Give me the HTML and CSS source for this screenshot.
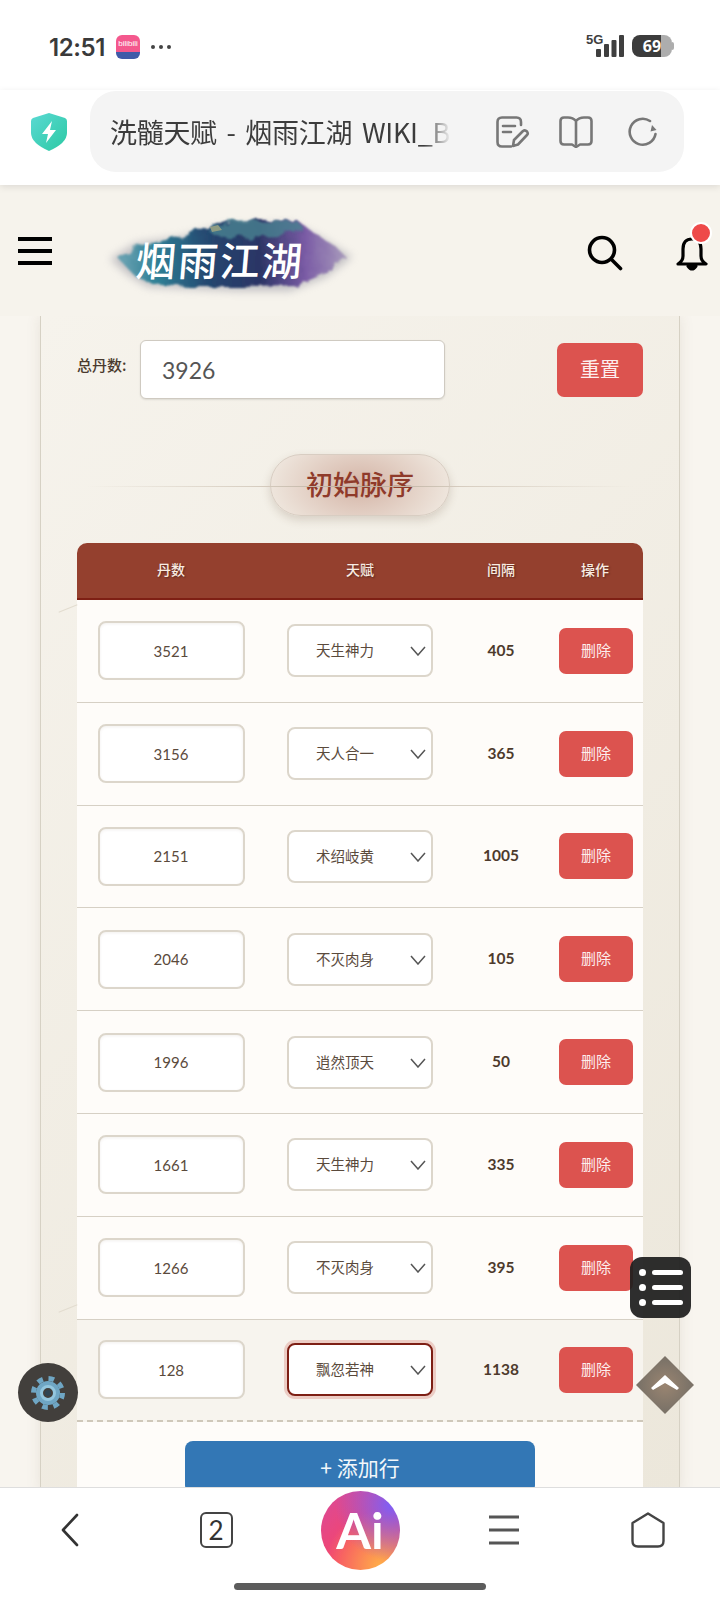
FILE: index.html
```html
<!DOCTYPE html>
<html lang="zh-CN">

<head>
    <meta charset="UTF-8">
    <meta name="viewport" content="width=device-width, initial-scale=1.0">
    <title>洗髓天赋 - 烟雨江湖 WIKI</title>
    <link rel="stylesheet" href="styles.css">
</head>

<body>
    <div class="phone">
        <div class="status-bar">
            <span class="clock">12:51</span>
            <span class="app-badge"><span class="app-badge-name">bilibili</span></span>
            <span class="status-dots"><i></i><i></i><i></i></span>
            <span class="signal">
                <span class="signal-label">5G</span>
                <svg width="28" height="22" viewBox="0 0 28 22" fill="#3f3f3f">
                    <rect x="0" y="14" width="5" height="8" rx="1" />
                    <rect x="8" y="9" width="5" height="13" rx="1" />
                    <rect x="15.500" y="5" width="5" height="17" rx="1" />
                    <rect x="23" y="0" width="5" height="22" rx="1" />
                </svg>
            </span>
            <span class="battery"><span class="battery-level">69</span></span>
        </div>

        <div class="address-bar">
            <svg class="shield" width="36" height="38" viewBox="0 0 36 38">
                <defs>
                    <linearGradient id="shieldFill" x1="0" y1="0" x2="1" y2="1">
                        <stop offset="0" stop-color="#5ad9d3" />
                        <stop offset="1" stop-color="#2cc9a3" />
                    </linearGradient>
                </defs>
                <path d="M18 0 L34 5 Q36 6 36 8 V20 Q36 30 18 38 Q0 30 0 20 V8 Q0 6 2 5 Z" fill="url(#shieldFill)" />
                <path d="M21 8 L11 21 H17 L15 30 L25 17 H19 Z" fill="#fff" />
            </svg>
            <div class="url-pill">
                <span class="url-text">洗髓天赋 - 烟雨江湖 WIKI_B</span>
                <svg class="url-icon note" width="34" height="32" viewBox="0 0 34 32" fill="none" stroke="#777" stroke-width="2.600" stroke-linecap="round" stroke-linejoin="round">
                    <path d="M25 9 V6 Q25 1.500 20.500 1.500 H6 Q1.500 1.500 1.500 6 V26 Q1.500 30.500 6 30.500 H15" />
                    <path d="M7 10 H19 M7 16 H15" />
                    <path d="M17 30 L18 24 L27 15 Q29 13.500 31 15.500 Q32.500 17.500 31 19 L22 28.500 Z" />
                </svg>
                <svg class="url-icon book" width="34" height="32" viewBox="0 0 34 32" fill="none" stroke="#777" stroke-width="2.600" stroke-linejoin="round" stroke-linecap="round">
                    <path d="M17 5 Q14 1.500 9 1.500 H5 Q1.500 1.500 1.500 5 V25 Q1.500 28.500 5 28.500 H13 L17 31 L21 28.500 H29 Q32.500 28.500 32.500 25 V5 Q32.500 1.500 29 1.500 H25 Q20 1.500 17 5 V28" />
                </svg>
                <svg class="url-icon refresh" width="30" height="30" viewBox="0 0 30 30" fill="none" stroke="#777" stroke-width="2.600" stroke-linecap="round">
                    <path d="M27.500 17 A13 13 0 1 1 22 4" />
                    <path d="M24 8 L28.500 13 L22.500 14.500 Z" fill="#777" stroke="none" />
                </svg>
            </div>
        </div>

        <header class="site-header">
            <div class="hamburger"><i></i><i></i><i></i></div>
            <svg class="logo" width="280" height="100" viewBox="0 0 280 100">
                <defs>
                    <linearGradient id="inkFill" x1="0" y1="0" x2="1" y2="0">
                        <stop offset="0" stop-color="#6fa5b4" />
                        <stop offset="0.170" stop-color="#2f7f95" />
                        <stop offset="0.400" stop-color="#24466f" />
                        <stop offset="0.620" stop-color="#2b3565" />
                        <stop offset="0.820" stop-color="#7a5ba5" />
                        <stop offset="1" stop-color="#a99cbc" />
                    </linearGradient>
                    <filter id="inkEdge" x="-10%" y="-30%" width="120%" height="160%">
                        <feTurbulence type="fractalNoise" baseFrequency="0.09" numOctaves="3" seed="4" result="noise" />
                        <feDisplacementMap in="SourceGraphic" in2="noise" scale="9" />
                        <feGaussianBlur stdDeviation="1.200" />
                    </filter>
                    <filter id="inkHaze" x="-10%" y="-30%" width="120%" height="160%">
                        <feGaussianBlur stdDeviation="4" />
                    </filter>
                </defs>
                <path d="M20 54 L46 38 L90 32 L130 22 L200 18 L230 32 L262 52 L236 72 L200 86 L150 86 L100 84 L58 82 L38 70 Z" fill="#8f8f9c" opacity="0.500" filter="url(#inkHaze)" />
                <path d="M28 53 L48 41 L85 33 L112 24 L140 16 L205 14 L224 28 L246 42 L256 52 L236 68 L205 81 L150 82 L100 82 L60 79 L42 68 Z" fill="url(#inkFill)" filter="url(#inkEdge)" />
                <path d="M118 25 L124 20 L132 22 L140 15 L160 14 L172 18 L182 14 L206 15 L214 23 L190 31 L150 33 L125 31 Z" fill="#4a8291" filter="url(#inkEdge)" opacity="0.800" />
                <path d="M120 22 L128 20 L132 25 L122 27 Z" fill="#b0ae80" opacity="0.700" />
                <text class="logo-text" x="45" y="71" transform="skewX(-5) translate(6 0)">烟雨江湖</text>
            </svg>
            <div class="header-tools">
                <svg width="36" height="36" viewBox="0 0 36 36" fill="none" stroke="#000" stroke-width="3.600" stroke-linecap="round">
                    <circle cx="15" cy="15" r="12.500" />
                    <path d="M24.500 24.500 L33.500 33.500" />
                </svg>
                <span class="bell">
                    <svg width="32" height="36" viewBox="0 0 32 36" fill="none" stroke="#000" stroke-width="3.200" stroke-linejoin="round">
                        <path d="M16 4 Q25 4 25 14 V21 Q25 26 30 29 H2 Q7 26 7 21 V14 Q7 4 16 4 Z" />
                        <path d="M12 31 Q16 37 20 31 Z" fill="#000" />
                    </svg>
                    <span class="bell-dot"></span>
                </span>
            </div>
        </header>

        <main class="page">
            <section class="panel">
                <div class="total-row">
                    <label class="total-label" for="totalPills">总丹数:</label>
                    <input class="total-input" id="totalPills" type="text" value="3926">
                    <button class="danger-btn reset-btn">重置</button>
                </div>

                <div class="section-title"><h2>初始脉序</h2></div>

                <div class="pulse-table">
                    <div class="pulse-head">
                        <span>丹数</span><span>天赋</span><span>间隔</span><span>操作</span>
                    </div>

                    <div class="pulse-row">
                        <div class="cell"><input class="pill-input" type="text" value="3521"></div>
                        <div class="cell"><span class="talent-select"><select><option>天生神力</option></select><svg width="16" height="10" viewBox="0 0 16 10" fill="none" stroke="#555" stroke-width="1.500"><path d="M1 1 L8 9 L15 1" /></svg></span></div>
                        <div class="cell gap-value">405</div>
                        <div class="cell"><button class="danger-btn delete-btn">删除</button></div>
                    </div>
                    <div class="pulse-row">
                        <div class="cell"><input class="pill-input" type="text" value="3156"></div>
                        <div class="cell"><span class="talent-select"><select><option>天人合一</option></select><svg width="16" height="10" viewBox="0 0 16 10" fill="none" stroke="#555" stroke-width="1.500"><path d="M1 1 L8 9 L15 1" /></svg></span></div>
                        <div class="cell gap-value">365</div>
                        <div class="cell"><button class="danger-btn delete-btn">删除</button></div>
                    </div>
                    <div class="pulse-row">
                        <div class="cell"><input class="pill-input" type="text" value="2151"></div>
                        <div class="cell"><span class="talent-select"><select><option>术绍岐黄</option></select><svg width="16" height="10" viewBox="0 0 16 10" fill="none" stroke="#555" stroke-width="1.500"><path d="M1 1 L8 9 L15 1" /></svg></span></div>
                        <div class="cell gap-value">1005</div>
                        <div class="cell"><button class="danger-btn delete-btn">删除</button></div>
                    </div>
                    <div class="pulse-row">
                        <div class="cell"><input class="pill-input" type="text" value="2046"></div>
                        <div class="cell"><span class="talent-select"><select><option>不灭肉身</option></select><svg width="16" height="10" viewBox="0 0 16 10" fill="none" stroke="#555" stroke-width="1.500"><path d="M1 1 L8 9 L15 1" /></svg></span></div>
                        <div class="cell gap-value">105</div>
                        <div class="cell"><button class="danger-btn delete-btn">删除</button></div>
                    </div>
                    <div class="pulse-row">
                        <div class="cell"><input class="pill-input" type="text" value="1996"></div>
                        <div class="cell"><span class="talent-select"><select><option>逍然顶天</option></select><svg width="16" height="10" viewBox="0 0 16 10" fill="none" stroke="#555" stroke-width="1.500"><path d="M1 1 L8 9 L15 1" /></svg></span></div>
                        <div class="cell gap-value">50</div>
                        <div class="cell"><button class="danger-btn delete-btn">删除</button></div>
                    </div>
                    <div class="pulse-row">
                        <div class="cell"><input class="pill-input" type="text" value="1661"></div>
                        <div class="cell"><span class="talent-select"><select><option>天生神力</option></select><svg width="16" height="10" viewBox="0 0 16 10" fill="none" stroke="#555" stroke-width="1.500"><path d="M1 1 L8 9 L15 1" /></svg></span></div>
                        <div class="cell gap-value">335</div>
                        <div class="cell"><button class="danger-btn delete-btn">删除</button></div>
                    </div>
                    <div class="pulse-row">
                        <div class="cell"><input class="pill-input" type="text" value="1266"></div>
                        <div class="cell"><span class="talent-select"><select><option>不灭肉身</option></select><svg width="16" height="10" viewBox="0 0 16 10" fill="none" stroke="#555" stroke-width="1.500"><path d="M1 1 L8 9 L15 1" /></svg></span></div>
                        <div class="cell gap-value">395</div>
                        <div class="cell"><button class="danger-btn delete-btn">删除</button></div>
                    </div>
                    <div class="pulse-row is-active">
                        <div class="cell"><input class="pill-input" type="text" value="128"></div>
                        <div class="cell"><span class="talent-select is-focused"><select><option>飘忽若神</option></select><svg width="16" height="10" viewBox="0 0 16 10" fill="none" stroke="#555" stroke-width="1.500"><path d="M1 1 L8 9 L15 1" /></svg></span></div>
                        <div class="cell gap-value">1138</div>
                        <div class="cell"><button class="danger-btn delete-btn">删除</button></div>
                    </div>

                    <div class="add-row">
                        <button class="add-btn">+ 添加行</button>
                    </div>
                </div>
            </section>
        </main>

        <nav class="bottom-nav">
            <div class="nav-items">
                <svg class="nav-back" width="20" height="34" viewBox="0 0 20 34" fill="none" stroke="#333" stroke-width="2.600" stroke-linecap="round" stroke-linejoin="round">
                    <path d="M17 2 L3 17 L17 32" />
                </svg>
                <span class="tab-count">2</span>
                <span class="ai-btn">Ai</span>
                <svg width="32" height="30" viewBox="0 0 32 30" fill="none" stroke="#555" stroke-width="2.800">
                    <path d="M1 2 H31 M1 15 H31 M1 28 H31" />
                </svg>
                <svg width="34" height="36" viewBox="0 0 34 36" fill="none" stroke="#444" stroke-width="2.400" stroke-linejoin="round">
                    <path d="M17 1.500 L32.500 11 V29 Q32.500 34.500 27 34.500 H7 Q1.500 34.500 1.500 29 V11 Z" />
                </svg>
            </div>
            <div class="home-indicator"></div>
        </nav>

        <!-- floating page widgets -->
        <div class="float-gear">
            <svg width="36" height="36" viewBox="0 0 36 36" fill="none">
                <circle cx="18" cy="18" r="14.500" stroke="#6fa6c4" stroke-width="5" stroke-dasharray="5.700 5.700" />
                <circle cx="18" cy="18" r="9" stroke="#6fa6c4" stroke-width="6" />
                <circle cx="18" cy="18" r="6.500" stroke="#93c6de" stroke-width="3" />
                <circle cx="18" cy="18" r="3" fill="#2f4452" />
            </svg>
        </div>
        <div class="float-list">
            <span class="list-line"></span>
            <span class="list-line"></span>
            <span class="list-line"></span>
        </div>
        <div class="float-top">
            <svg width="28" height="15" viewBox="0 0 28 15" fill="#fff">
                <path d="M14 0 L28 13 L26 15 L14 8 L2 15 L0 13 Z" />
            </svg>
        </div>
    </div>
</body>

</html>
```

FILE: styles.css
```css
* {
    box-sizing: border-box;
}

body {
    margin: 0;
    font-family: Lato, "Noto Sans CJK SC", sans-serif;
    background-color: #ffffff;
    color: #4d3a2c;
}

.phone {
    position: relative;
    width: 720px;
    height: 1600px;
    display: flex;
    flex-direction: column;
    overflow: hidden;
}

/* status bar */
.status-bar {
    height: 90px;
    padding: 32px 48px 0 49px;
    display: flex;
    align-items: flex-start;
    background-color: #ffffff;
}

.clock {
    font-family: Inter, sans-serif;
    font-size: 24px;
    font-weight: 600;
    line-height: 32px;
    letter-spacing: -0.4px;
    color: #3a3a3a;
}

.app-badge {
    width: 24px;
    height: 24px;
    margin: 3px 0 0 11px;
    border-radius: 6px;
    background: linear-gradient(#f4588d 0 72%, #3f5aa8 72%);
    display: flex;
    justify-content: center;
}

.app-badge-name {
    font-family: "Liberation Sans", sans-serif;
    font-size: 8px;
    line-height: 17px;
    color: #fff;
}

.status-dots {
    margin: 13px 0 0 11px;
    display: flex;
    gap: 4px;
}

.status-dots i {
    width: 4px;
    height: 4px;
    border-radius: 50%;
    background-color: #444;
}

.signal {
    position: relative;
    margin: 3px 0 0 auto;
    padding-left: 10px;
}

.signal-label {
    position: absolute;
    left: 0;
    top: -2px;
    font-family: "Liberation Sans", sans-serif;
    font-size: 13px;
    font-weight: 700;
    line-height: 14px;
    color: #3f3f3f;
}

.battery {
    position: relative;
    width: 40px;
    height: 22px;
    margin: 3px 0 0 8px;
    border-radius: 8px;
    background: linear-gradient(90deg, #3c3c3c 0 72%, #adadad 72%);
    text-align: center;
}

.battery::after {
    content: "";
    position: absolute;
    right: -2px;
    top: 7px;
    width: 2px;
    height: 8px;
    background-color: #adadad;
    border-radius: 0 2px 2px 0;
}

.battery-level {
    font-family: "Open Sans", sans-serif;
    font-size: 16px;
    font-weight: 700;
    line-height: 22px;
    color: #fff;
}

/* browser address bar */
.address-bar {
    position: relative;
    z-index: 2;
    height: 95px;
    padding: 1px 36px 0 31px;
    display: flex;
    align-items: flex-start;
    background-color: #ffffff;
    box-shadow: 0 2px 7px rgba(0, 0, 0, 0.1);
}

.shield {
    margin: 22px 23px 0 0;
    flex-shrink: 0;
}

.url-pill {
    width: 594px;
    height: 81px;
    padding-left: 20px;
    display: flex;
    align-items: center;
    background-color: #f4f4f4;
    border-radius: 26px;
}

.url-text {
    width: 341px;
    white-space: nowrap;
    font-family: "Noto Sans CJK SC", sans-serif;
    font-size: 27px;
    line-height: 81px;
    letter-spacing: -0.3px;
    word-spacing: 4px;
    color: #3c3c3c;
    -webkit-mask-image: linear-gradient(90deg, #000 92%, transparent);
    mask-image: linear-gradient(90deg, #000 92%, transparent);
}

.url-icon {
    flex-shrink: 0;
}

.note {
    margin-left: 45px;
}

.book {
    margin-left: 29px;
}

.refresh {
    margin-left: 35px;
}

/* site header */
.site-header {
    height: 131px;
    padding: 0 12px 0 18px;
    display: flex;
    align-items: center;
    background-color: #f6f3ec;
}

.hamburger {
    width: 34px;
    display: flex;
    flex-direction: column;
    gap: 8px;
}

.hamburger i {
    height: 4px;
    background-color: #000;
}

.logo {
    margin: 9px 0 0 38px;
}

.logo-text {
    font-family: "Noto Sans CJK SC", sans-serif;
    font-size: 40px;
    font-weight: 500;
    letter-spacing: 2px;
    fill: #ffffff;
}

.header-tools {
    margin: 5px 0 0 auto;
    display: flex;
    align-items: center;
    gap: 53px;
}

.bell {
    position: relative;
    display: flex;
}

.bell-dot {
    position: absolute;
    right: -4px;
    top: -13px;
    width: 22px;
    height: 22px;
    border-radius: 50%;
    background-color: #ee4a4a;
    border: 2px solid #ffffff;
}

/* page body */
.page {
    flex: 1;
    min-height: 0;
    overflow: hidden;
    background-color: #f8f5ef;
}

.panel {
    position: relative;
    width: 640px;
    min-height: 100%;
    margin-left: 40px;
    padding: 24px 36px 0;
    background: linear-gradient(135deg, #f6f3ec, #ece7db);
    border-left: 1px solid #d6d1c4;
    border-right: 1px solid #d6d1c4;
    box-shadow: 0 0 14px rgba(90, 70, 40, 0.1);
}

/* faint paper strokes on the left margin */
.panel::before,
.panel::after {
    content: "";
    position: absolute;
    left: 17px;
    width: 20px;
    height: 1px;
    background-color: #e2dccf;
    transform: rotate(-22deg);
}

.panel::before {
    top: 292px;
}

.panel::after {
    top: 992px;
}

.total-row {
    display: flex;
    align-items: center;
}

.total-label {
    width: 63px;
    margin-bottom: 11px;
    font-family: "Noto Sans CJK SC", sans-serif;
    font-size: 15px;
    font-weight: 500;
    white-space: nowrap;
    color: #4a3a2e;
}

.total-input {
    width: 305px;
    height: 59px;
    padding: 0 21px;
    border: 1px solid #cfcac1;
    border-radius: 6px;
    background-color: #ffffff;
    box-shadow: 0 1px 2px rgba(0, 0, 0, 0.1);
    font-family: Lato, sans-serif;
    font-size: 23px;
    color: #555;
}

.danger-btn {
    border: none;
    background-color: #dc534f;
    color: #fdeeee;
    font-family: "Noto Sans CJK SC", sans-serif;
}

.reset-btn {
    width: 86px;
    height: 54px;
    margin-left: auto;
    padding-bottom: 3px;
    border-radius: 7px;
    font-size: 20px;
}

.section-title {
    position: relative;
    margin-top: 55px;
    display: flex;
    justify-content: center;
}

.section-title::after {
    content: "";
    position: absolute;
    left: 10px;
    right: 10px;
    top: 32px;
    height: 1px;
    background: linear-gradient(90deg, transparent, #d8cfc2 30%, #b8a898 50%, #d8cfc2 70%, transparent);
}

.section-title h2 {
    width: 180px;
    height: 62px;
    margin: 0;
    border: 1px solid #d8cdc2;
    border-radius: 31px;
    background: radial-gradient(ellipse 50% 90% at 50% 50%, #d4b4a6, #eee5dc);
    box-shadow: 0 4px 10px rgba(90, 60, 40, 0.18);
    font-family: "Noto Sans CJK SC", sans-serif;
    font-size: 27px;
    font-weight: 500;
    line-height: 57px;
    text-align: center;
    color: #8f3a2a;
}

.pulse-table {
    margin-top: 27px;
    background-color: #fefcf9;
    border-radius: 10px 10px 0 0;
    overflow: hidden;
}

.pulse-head,
.pulse-row {
    display: grid;
    grid-template-columns: 188px 190px 92px 96px;
}

.pulse-head {
    height: 57px;
    padding-bottom: 3px;
    align-items: center;
    background-color: #94402e;
    border-bottom: 2px solid #7e1f14;
    font-family: "Noto Sans CJK SC", sans-serif;
    font-size: 14px;
    font-weight: 500;
    text-align: center;
    color: #f9ece2;
    text-shadow: 1px 1px 2px rgba(0, 0, 0, 0.4);
}

.pulse-row {
    height: 102.800px;
    border-bottom: 1px solid #d6d0c5;
}

.pulse-row.is-active {
    background-color: #f7f4ee;
    border-bottom: 2px dashed #cfc8ba;
}

.cell {
    display: flex;
    align-items: center;
    justify-content: center;
}

.pill-input {
    width: 147px;
    height: 59px;
    border: 2px solid #dcd6cb;
    border-radius: 8px;
    background-color: #ffffff;
    box-shadow: inset 0 1px 3px rgba(90, 70, 40, 0.08);
    font-family: Lato, sans-serif;
    font-size: 15px;
    text-align: center;
    color: #5a4a3c;
}

.talent-select {
    position: relative;
    display: flex;
    width: 146px;
    height: 53px;
}

.talent-select select {
    width: 100%;
    height: 100%;
    padding: 0 0 2px 27px;
    border: 2px solid #dcd6cb;
    border-radius: 8px;
    background-color: #ffffff;
    appearance: none;
    font-family: "Noto Sans CJK SC", sans-serif;
    font-size: 14.500px;
    color: #5a4a3c;
}

.talent-select svg {
    position: absolute;
    right: 7px;
    top: 22px;
}

.talent-select.is-focused select {
    border-color: #7d1f14;
    box-shadow: 0 0 0 3px rgba(214, 130, 118, 0.35);
}

.gap-value {
    padding-bottom: 2px;
    font-size: 15.500px;
    font-weight: 700;
    color: #4d3a2c;
}

.delete-btn {
    width: 74px;
    height: 46px;
    margin-left: 2px;
    padding-bottom: 4px;
    border-radius: 7px;
    font-size: 15px;
}

.add-row {
    padding-top: 19px;
    display: flex;
    justify-content: center;
}

.add-btn {
    width: 350px;
    height: 52px;
    padding-bottom: 2px;
    border: none;
    border-radius: 8px;
    background-color: #3377b5;
    font-family: "Noto Sans CJK SC", sans-serif;
    font-size: 21px;
    color: #f2f7fb;
}

/* browser bottom bar */
.bottom-nav {
    height: 113px;
    background-color: #ffffff;
    border-top: 1px solid #dedede;
}

.nav-items {
    height: 84px;
    display: grid;
    grid-template-columns: repeat(5, 144px);
    align-items: center;
    justify-items: center;
}

.nav-back {
    margin-right: 4px;
}

.tab-count {
    width: 33px;
    height: 36px;
    border: 2px solid #444;
    border-radius: 6px;
    font-family: Lato, sans-serif;
    font-size: 26px;
    line-height: 32px;
    text-align: center;
    color: #333;
}

.ai-btn {
    width: 79px;
    height: 79px;
    border-radius: 50%;
    background:
        radial-gradient(circle at 88% 18%, #7f5ff5 0, rgba(127, 95, 245, 0) 58%),
        radial-gradient(circle at 75% 95%, #ffae48 0, rgba(255, 174, 72, 0) 58%),
        linear-gradient(135deg, #d84a9c, #f5456b 55%);
    font-family: Lato, sans-serif;
    font-size: 50px;
    font-weight: 700;
    line-height: 79px;
    text-align: center;
    color: #ffffff;
}

.home-indicator {
    width: 252px;
    height: 7px;
    margin: 11px auto 0;
    border-radius: 4px;
    background-color: #5c5c5c;
}

/* floating widgets over the page */
.float-gear {
    position: absolute;
    left: 18px;
    top: 1363px;
    width: 60px;
    height: 59px;
    border-radius: 50%;
    background-color: #423f3c;
    display: flex;
    align-items: center;
    justify-content: center;
}

.float-list {
    position: absolute;
    left: 630px;
    top: 1257px;
    width: 61px;
    height: 61px;
    padding-left: 9px;
    border-radius: 12px;
    background-color: rgba(30, 30, 30, 0.93);
    display: flex;
    flex-direction: column;
    justify-content: center;
    gap: 10px;
}

.list-line {
    position: relative;
    width: 31px;
    height: 5px;
    margin-left: 13px;
    border-radius: 3px;
    background-color: #ffffff;
}

.list-line::before {
    content: "";
    position: absolute;
    left: -13px;
    top: -1px;
    width: 7px;
    height: 7px;
    border-radius: 50%;
    background-color: #ffffff;
}

.float-top {
    position: absolute;
    left: 636px;
    top: 1356px;
    width: 58px;
    height: 58px;
    background: radial-gradient(circle, #9a8571, #7c7368 60%);
    clip-path: polygon(50% 0, 100% 50%, 50% 100%, 0 50%);
    display: flex;
    align-items: center;
    justify-content: center;
    padding-bottom: 6px;
}
```
